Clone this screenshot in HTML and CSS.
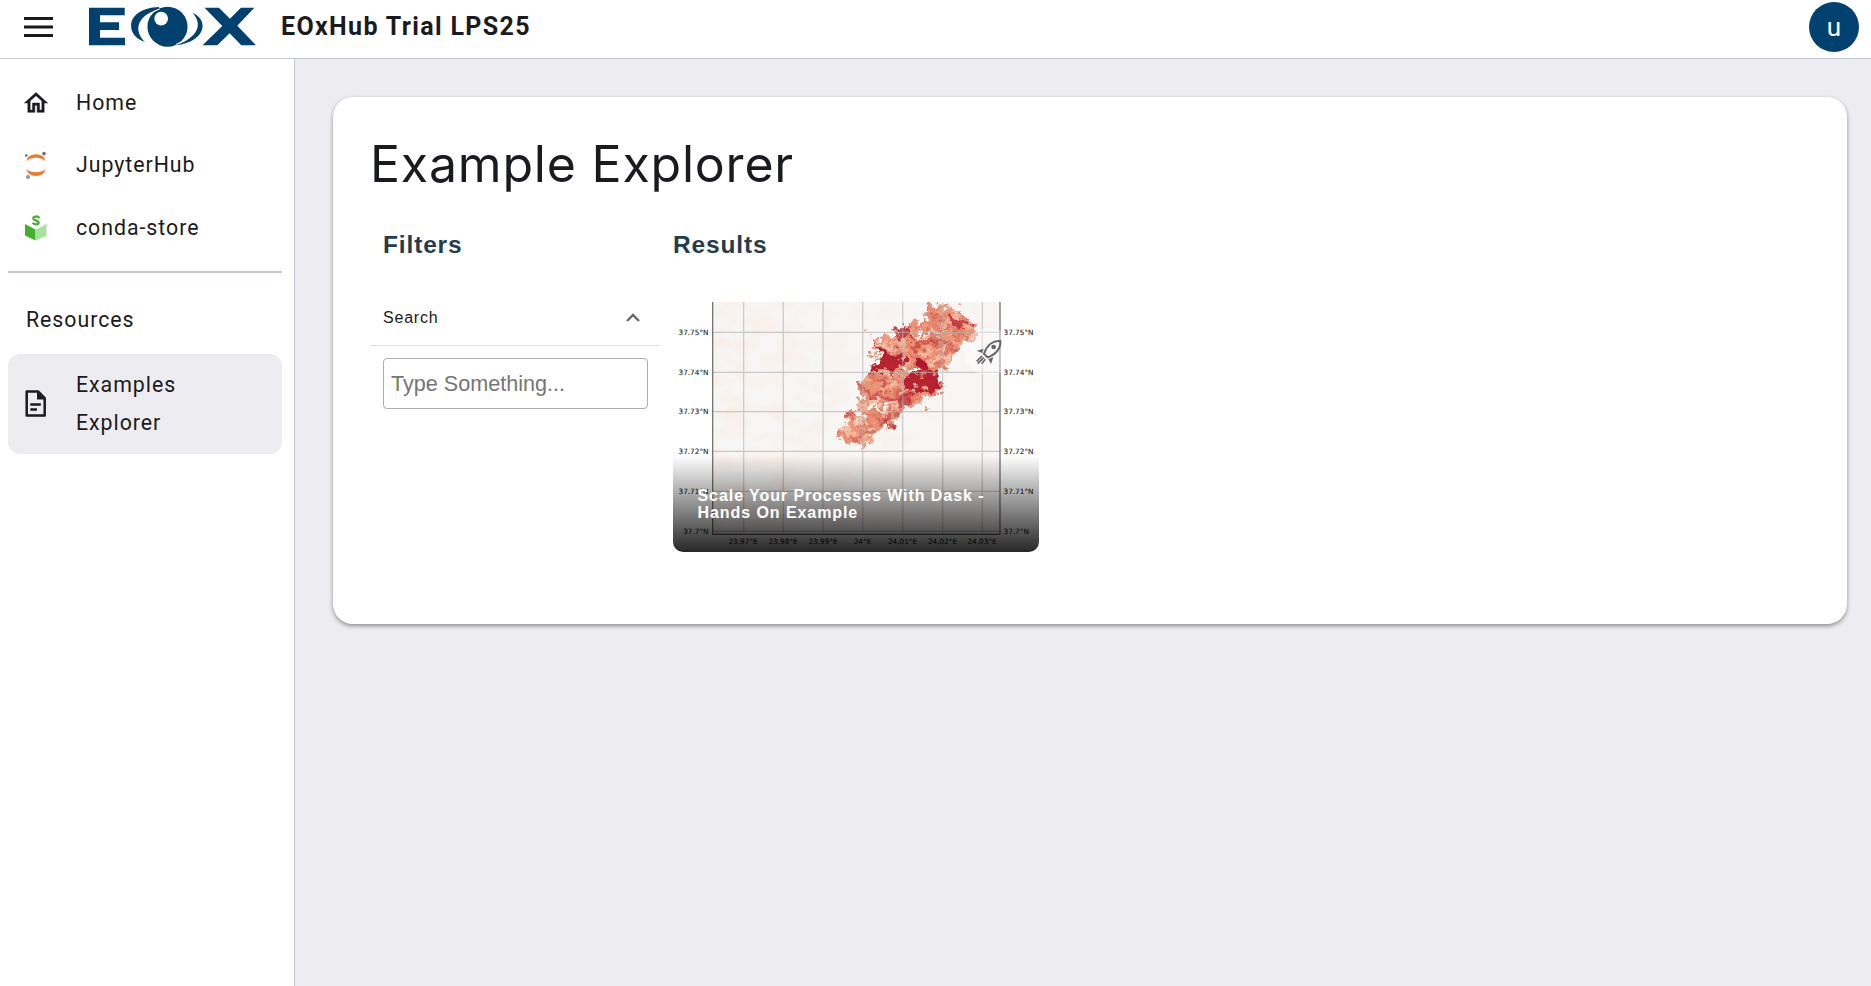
FILE: index.html
```html
<!DOCTYPE html>
<html lang="en">
<head>
<meta charset="utf-8">
<title>EOxHub Trial LPS25</title>
<link rel="stylesheet" href="styles.css">
</head>
<body>
<header class="topbar">
  <svg class="menu-icon" viewBox="0 0 29 20"><path d="M0 1.5h29M0 10h29M0 18.500h29" stroke="#1a1b20" stroke-width="3"/></svg>
  <svg class="logo" viewBox="267 20 500 121" fill="#004170">
    <path d="M267 24H374V47H300V68H357V91H300V114H375V137H267Z"/>
    <path d="M477 22C425 24 393 47 393 78C393 100 408 117 435 127C404 98 402 51 477 28Z"/>
    <circle cx="502" cy="81" r="60"/>
    <circle cx="483" cy="57" r="20.500" fill="#fff"/>
    <path d="M440 68Q448 38 478 28" fill="none" stroke="#fff" stroke-width="3"/>
    <path d="M577 39C625 59 621 124 527 137C593 112 609 75 577 39Z"/>
    <path d="M528 133C552 125 566 113 574 98" fill="none" stroke="#fff" stroke-width="2"/>
    <path d="M613 24H656L689 57L722 24H762L711 78L767 137H723L688 101L651 137H607L666 79Z"/>
  </svg>
  <div class="brand">EOxHub Trial LPS25</div>
  <div class="avatar">u</div>
</header>
<div class="body">
  <nav class="sidebar">
    <a class="item"><svg class="icon" viewBox="0 0 24 24"><path fill="#1a1b20" stroke="#1a1b20" stroke-width=".4" d="M12 5.690l5 4.500V18h-2v-6H9v6H7v-7.810l5-4.500M12 3L2 12h3v8h6v-6h2v6h6v-8h3L12 3"/></svg><span>Home</span></a>
    <a class="item"><svg class="icon" viewBox="0 0 28 28"><path fill="#f37726" d="M4 10.500Q6 3.300 14 3.300T24 10.500Q21 6.700 14 6.700T4 10.500ZM4 17.500Q6 25 14 25T24 17.500Q21 21.300 14 21.300T4 17.500Z"/><circle cx="22" cy="2.600" r="1.800" fill="#6e6e70"/><circle cx="4.300" cy="4.500" r="1.200" fill="#616262"/><circle cx="6" cy="26" r="2.100" fill="#989798"/></svg><span>JupyterHub</span></a>
    <a class="item"><svg class="icon" viewBox="0 0 28 28"><path fill="#40b02e" d="M3 10L13.500 15.500V26.500L3 21.500Z"/><path fill="#a7e29d" d="M24.500 10L14 15.500V26.500L24.500 21.500Z"/><path d="M17.500 4.200C16 1.600 10.800 2 11.300 4.800C11.800 7 17 6.300 16.700 9C16.300 11 11.700 10.600 10.600 8.800" fill="none" stroke="#40b02e" stroke-width="2.200"/></svg><span>conda-store</span></a>
    <hr class="rule">
    <div class="group">Resources</div>
    <a class="item active"><svg class="icon" viewBox="0 0 28 28"><path d="M4.700 1.500H16L22.700 8.200V25.500H4.700Z" fill="none" stroke="#1a1b20" stroke-width="2.500" stroke-linejoin="round"/><path d="M15 2V9.500H22.700Z" fill="#1a1b20"/><path d="M8.300 14.500H18.800M8.300 19.500H15" stroke="#1a1b20" stroke-width="2.500"/></svg><span>Examples Explorer</span></a>
  </nav>
  <main class="content">
    <section class="card">
      <h1>Example Explorer</h1>
      <div class="columns">
        <div class="filters">
          <h2>Filters</h2>
          <div class="filter-head"><span>Search</span><svg class="chevron" viewBox="0 0 14 9"><path d="M1 8L7 2L13 8" fill="none" stroke="#666" stroke-width="2.300"/></svg></div>
          <input class="search" placeholder="Type Something...">
        </div>
        <div class="results">
          <h2>Results</h2>
          <article class="tile">
            <svg class="map" viewBox="0 0 366 250" color-interpolation-filters="sRGB">
              <defs>
                <filter id="rough" x="-10%" y="-10%" width="120%" height="120%"><feTurbulence type="fractalNoise" baseFrequency=".04" numOctaves="5" seed="4" result="n"/><feDisplacementMap in="SourceGraphic" in2="n" scale="60" xChannelSelector="R" yChannelSelector="G"/><feGaussianBlur stdDeviation="1.600"/></filter>
                <filter id="specks" x="0" y="0" width="100%" height="100%"><feTurbulence type="fractalNoise" baseFrequency=".02 .04" numOctaves="5" seed="8"/><feColorMatrix values="0 0 0 0 .76  0 0 0 0 .22  0 0 0 0 .2  3 0 0 0 -1.350"/><feComposite in2="SourceGraphic" operator="in"/></filter>
                <filter id="pale" x="0" y="0" width="100%" height="100%"><feTurbulence type="fractalNoise" baseFrequency=".024 .045" numOctaves="5" seed="21"/><feColorMatrix values="0 0 0 0 .97  0 0 0 0 .76  0 0 0 0 .66  0 5 0 0 -2.400"/><feComposite in2="SourceGraphic" operator="in"/></filter>
                <filter id="haze" x="0" y="0" width="100%" height="100%"><feTurbulence type="fractalNoise" baseFrequency=".04 .06" numOctaves="5" seed="3"/><feColorMatrix values="0 0 0 0 1  0 0 0 0 .87  0 0 0 0 .79  3 0 0 0 -1.200"/></filter>
                <linearGradient id="fade"><stop offset="0" stop-color="#fff"/><stop offset=".75" stop-color="#222"/></linearGradient>
                <mask id="left"><rect width="366" height="250" fill="url(#fade)"/></mask>
                <path id="burn" d="M800 53L860 48L905 60L915 82L952 105L935 155L905 165L870 215L840 245L848 285L832 308L790 322L760 350L715 365L690 425L640 440L625 468L580 462L540 440L555 370L590 350L605 318L585 285L610 268L650 225L660 190L640 150L700 130L740 100L790 105Z"/>
              </defs>
              <rect width="366" height="250" fill="#fff"/>
              <rect x="40" width="287" height="232" fill="#f8f6f5"/>
              <g mask="url(#left)"><rect x="40" width="287" height="232" filter="url(#haze)" opacity=".35"/></g>
              <g transform="translate(-13 -12) scale(.33333)">
                <g filter="url(#rough)">
                  <use href="#burn" fill="#ec9476"/>
                  <use href="#burn" filter="url(#pale)"/>
                  <use href="#burn" filter="url(#specks)" opacity=".75"/>
                  <g fill="#b2182b">
                    <path d="M650 160L690 195L733 185L728 238L705 246L645 242L630 252L660 210Z" opacity=".92"/>
                    <path d="M733 252L790 245L844 252L836 295L800 302L770 304L735 290Z" opacity=".92"/>
                    <path d="M758 208L804 222L800 240L775 238Z"/>
                    <path d="M700 130L745 102L758 132L735 150Z" opacity=".7"/>
                    <path d="M855 80L895 83L947 108L900 112Z" opacity=".7"/>
                    <path d="M790 155L840 145L890 160L878 175Z" opacity=".3"/>
                    <path d="M700 325L765 310L745 355L710 352Z" opacity=".6"/>
                    <path d="M625 315L680 318L720 345L660 330Z" opacity=".5"/>
                    <path d="M660 375L700 380L690 420Z" opacity=".5"/>
                  </g>
                  <path d="M625 335Q650 352 692 345L690 358Q650 365 625 350ZM735 235Q755 225 780 245L745 248ZM760 130L790 122L790 150L765 155ZM588 355L606 355L612 395L592 388ZM805 120L855 128L800 138ZM650 425L680 400L700 440L640 470ZM545 375L560 375L550 420L535 430Z" fill="#faf2ee"/>
                  <path d="M618 110h7v6h-7ZM785 345h13v7h-13ZM628 165L665 178L640 185ZM620 190L660 202L630 210Z" fill="#e8967b"/>
                </g>
              </g>
              <path d="M70.700 0V232M110.300 0V232M150 0V232M189.700 0V232M229.700 0V232M269.700 0V232M309.300 0V232M40 30.300H327M40 70.300H327M40 109.700H327M40 149.300H327M40 189.300H327M40 229.300H327" stroke="#b0b0b0" stroke-opacity=".65" stroke-width="1.200"/>
              <path d="M39.700 0V232.300H327V0" fill="none" stroke="#666" stroke-width="1.200"/>
              <g class="ticks" text-anchor="end"><text x="35.500" y="32.800">37.75°N</text><text x="35.500" y="72.800">37.74°N</text><text x="35.500" y="112.200">37.73°N</text><text x="35.500" y="151.800">37.72°N</text><text x="35.500" y="191.800">37.71°N</text><text x="35.500" y="231.800">37.7°N</text></g>
              <g class="ticks"><text x="330.500" y="32.800">37.75°N</text><text x="330.500" y="72.800">37.74°N</text><text x="330.500" y="112.200">37.73°N</text><text x="330.500" y="151.800">37.72°N</text><text x="330.500" y="191.800">37.71°N</text><text x="330.500" y="231.800">37.7°N</text></g>
              <g class="ticks" text-anchor="middle"><text x="70" y="242.300">23.97°E</text><text x="110" y="242.300">23.98°E</text><text x="150" y="242.300">23.99°E</text><text x="189.500" y="242.300">24°E</text><text x="229.500" y="242.300">24.01°E</text><text x="269.500" y="242.300">24.02°E</text><text x="309" y="242.300">24.03°E</text></g>
              <circle cx="315.500" cy="49.700" r="24" fill="#fff" fill-opacity=".4"/>
              <g transform="translate(-13 -12) scale(.33333)" fill="none" stroke="#666" stroke-width="6">
                <path d="M1021 153C1000 151 981 164 972 191L983 202C1009 194 1023 173 1021 153Z"/>
                <circle cx="1001" cy="171" r="7" fill="#666" stroke="none"/>
                <path d="M971 176L950 182L966 189ZM985 207L1000 202L993 222Z" fill="#666" stroke="none"/>
                <path d="M966 198L950 214M971 203L953 221M976 208L965 221" stroke-width="5"/>
              </g>
            </svg>
            <div class="caption">Scale Your Processes With Dask - Hands On Example</div>
          </article>
        </div>
      </div>
    </section>
  </main>
</div>
</body>
</html>
```
FILE: styles.css
```css
* { box-sizing: border-box; }
body { margin: 0; height: 986px; display: flex; flex-direction: column; overflow: hidden; background: #edecf1; color: #1a1b20; font-family: Inter, sans-serif; }
.topbar { height: 59px; flex: none; display: flex; align-items: center; padding: 0 12px 4px 24px; background: #fff; border-bottom: 1px solid #c2c6cf; }
.menu-icon { width: 29px; height: 20px; }
.logo { width: 167px; height: 41px; margin: 0 0 1px 36px; }
.brand { margin-left: 25px; font: 700 25px/32px Roboto, sans-serif; letter-spacing: 1.35px; }
.avatar { width: 50px; height: 50px; margin-left: auto; border-radius: 50%; background: #004170; color: #fff; font: 400 26px/50px Roboto, sans-serif; text-align: center; }
.body { flex: 1; display: flex; min-height: 0; }
.sidebar { width: 295px; flex: none; background: #fff; border-right: 1px solid #c2c6cf; padding: 12.6px 12px 0 8px; font: 400 21.3px/38px Roboto, sans-serif; letter-spacing: .97px; }
.item { display: flex; align-items: center; gap: 26px; padding: 12px 60px 12px 14px; margin-bottom: .5px; }
.active { background: #edecf1; border-radius: 12px; }
.icon { width: 28px; height: 28px; flex: none; overflow: visible; }
.rule { height: 2px; border: 0; margin: 12.4px 0 28px; background: #c2c6cf; }
.group { padding-left: 18px; margin-bottom: 15px; }
.content { flex: 1; padding: 38px 24px 0 38px; }
.card { height: 527px; background: #fff; border-radius: 20px; padding: 38px 37px; box-shadow: 0 2px 4px rgba(0,0,0,.4); }
h1 { margin: 0; font: 400 50px/58px Inter, sans-serif; letter-spacing: .8px; }
.columns { display: flex; margin-top: 36px; }
.filters { width: 290px; font-family: "Liberation Sans", sans-serif; }
h2 { margin: 0; color: #263c4b; font: 700 24.5px/32px "Liberation Sans", sans-serif; letter-spacing: .85px; }
.filters h2 { padding-left: 13px; }
.filter-head { display: flex; justify-content: space-between; align-items: center; height: 56px; margin: 29px 0 12px; padding: 0 20px 0 13px; border-bottom: 1px solid #dcdcdc; font-size: 16px; letter-spacing: .8px; }
.chevron { width: 14px; height: 9px; }
.search { display: block; width: 265px; height: 51px; margin-left: 13px; padding: 1px 7px 0; border: 1px solid #adadad; border-radius: 4px; font: 21.6px "Liberation Sans", sans-serif; }
.results { margin-left: 13px; }
.tile { position: relative; width: 366px; height: 250px; margin-top: 41px; overflow: hidden; border-radius: 0 0 10px 10px; }
.map { display: block; width: 366px; height: 250px; }
.ticks { font: 7.3px "DejaVu Sans", sans-serif; fill: #222; stroke: #222; stroke-width: .1px; }
.caption { position: absolute; inset: auto 0 0; height: 96px; padding: 31px 44px 0 24.5px; background: linear-gradient(rgba(0,0,0,0), rgba(0,0,0,.85)); color: #fff; font: 700 16px/17px "Liberation Sans", sans-serif; letter-spacing: .93px; }
```
